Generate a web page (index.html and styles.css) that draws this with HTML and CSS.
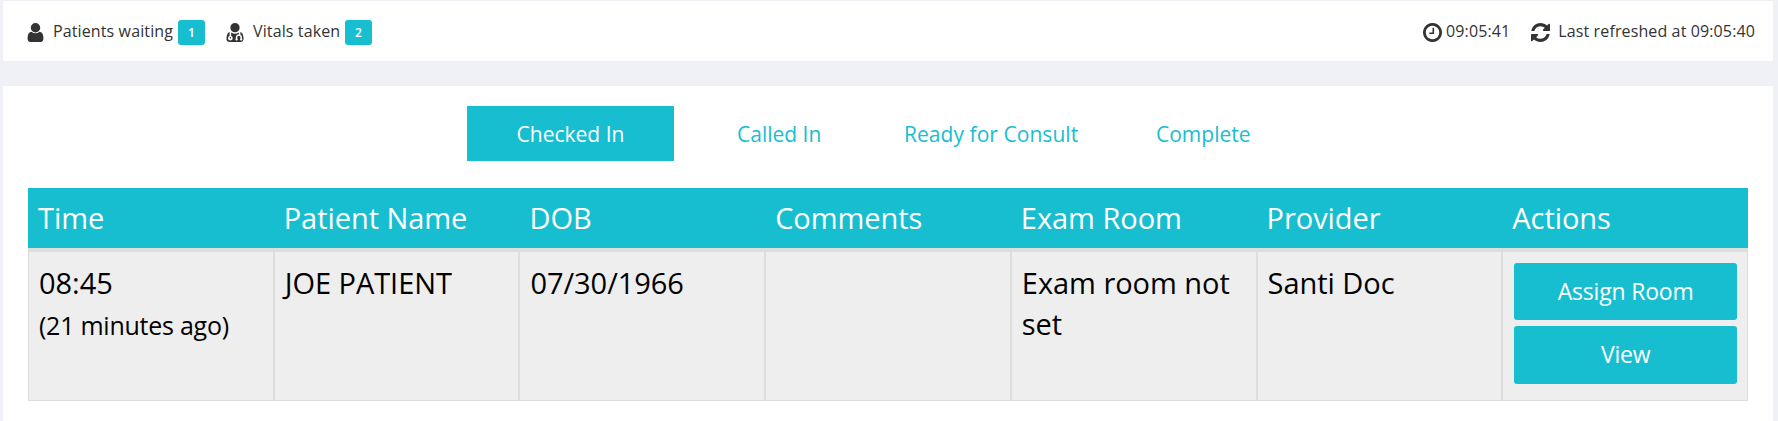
FILE: index.html
```
<!DOCTYPE html>
<html lang="en">
<head>
<meta charset="utf-8">
<title>Patient Flow</title>
<link rel="stylesheet" href="styles.css">
</head>
<body>
<header class="panel status">
  <div class="stat">
    <svg class="icon icon-user" viewBox="256 128 1280 1536"><path d="M1536 1399q0 109-62.500 187t-150.500 78h-854q-88 0-150.500-78t-62.500-187q0-85 8.500-160.500t31.500-152 58.500-131 94-89 134.500-34.500q131 128 313 128t313-128q76 0 134.500 34.500t94 89 58.500 131 31.500 152 8.500 160.500zm-256-887q0 159-112.500 271.500t-271.500 112.500-271.500-112.500-112.500-271.500 112.500-271.500 271.500-112.500 271.500 112.500 112.500 271.500z"/></svg>
    <span class="waiting">Patients waiting</span><span class="badge">1</span>
  </div>
  <div class="stat">
    <svg class="icon icon-md" viewBox="192 128 1408 1572"><path d="M576 1344q0 26-19 45t-45 19-45-19-19-45 19-45 45-19 45 19 19 45zm1024 99q0 121-73 189t-194 68h-874q-121 0-194-68t-73-189q0-68 5.500-131t24-138 47.500-132.500 81-103 120-60.500q-22 52-22 120v203q-58 20-93 70t-35 111q0 80 56 136t136 56 136-56 56-136q0-61-35.500-111t-92.500-70v-203q0-62 25-93 132 104 295 104t295-104q25 31 25 93v64q-106 0-181 75t-75 181v89q-32 29-32 71 0 40 28 68t68 28 68-28 28-68q0-42-32-71v-89q0-52 38-90t90-38 90 38 38 90v89q-32 29-32 71 0 40 28 68t68 28 68-28 28-68q0-42-32-71v-89q0-68-34.500-127.500t-93.500-93.500q0-10 .5-42.500t0-48-2.500-41.500-7-47-13-40q68 15 120 60.500t81 103 47.500 132.500 24 138 5.500 131zm-320-931q0 159-112.500 271.500t-271.500 112.500-271.500-112.500-112.500-271.500 112.500-271.500 271.500-112.500 271.500 112.500 112.500 271.500z"/></svg>
    <span class="vitals">Vitals taken</span><span class="badge">2</span>
  </div>
  <div class="stat clock">
    <svg class="icon" viewBox="128 128 1536 1536"><path d="M1024 544v448q0 14-9 23t-23 9h-320q-14 0-23-9t-9-23v-64q0-14 9-23t23-9h224v-352q0-14 9-23t23-9h64q14 0 23 9t9 23zm416 352q0-148-73-273t-198-198-273-73-273 73-198 198-73 273 73 273 198 198 273 73 273-73 198-198 73-273zm224 0q0 209-103 385.500t-279.500 279.500-385.500 103-385.500-103-279.500-279.500-103-385.500 103-385.500 279.500-279.500 385.500-103 385.500 103 279.500 279.500 103 385.500z"/></svg>
    <span class="time">09:05:41</span>
  </div>
  <div class="stat">
    <svg class="icon" viewBox="128 128 1536 1536"><path d="M1639 1056q0 5-1 7-64 268-268 434.500t-478 166.500q-146 0-282.500-55t-243.500-157l-129 129q-19 19-45 19t-45-19-19-45v-448q0-26 19-45t45-19h448q26 0 45 19t19 45-19 45l-137 137q71 66 161 102t187 36q134 0 250-65t186-179q11-17 53-117 8-23 30-23h192q13 0 22.500 9.500t9.500 22.500zm25-800v448q0 26-19 45t-45 19h-448q-26 0-45-19t-19-45 19-45l138-138q-148-137-349-137-134 0-250 65t-186 179q-11 17-53 117-8 23-30 23h-199q-13 0-22.500-9.500t-9.500-22.500v-7q65-268 270-434.500t480-166.500q146 0 284 55.500t245 156.500l130-129q19-19 45-19t45 19 19 45z"/></svg>
    <span class="refreshed">Last refreshed at 09:05:40</span>
  </div>
</header>
<main class="panel board">
  <nav class="tabs">
    <a class="tab active">Checked In</a>
    <a class="tab called">Called In</a>
    <a class="tab ready">Ready for Consult</a>
    <a class="tab complete">Complete</a>
  </nav>
  <div class="table">
    <div class="row head">
      <div class="cell">Time</div><div class="cell">Patient Name</div><div class="cell">DOB</div><div class="cell">Comments</div><div class="cell">Exam Room</div><div class="cell">Provider</div><div class="cell">Actions</div>
    </div>
    <div class="row body">
      <div class="cell">08:45<div class="ago">(21 minutes ago)</div></div>
      <div class="cell">JOE PATIENT</div>
      <div class="cell">07/30/1966</div>
      <div class="cell"></div>
      <div class="cell">Exam room not set</div>
      <div class="cell">Santi Doc</div>
      <div class="cell actions"><button class="btn">Assign Room</button><button class="btn view">View</button></div>
    </div>
  </div>
</main>
</body>
</html>
```
FILE: styles.css
```
* { box-sizing: border-box; }
body {
  margin: 0;
  padding: 1px 5px 0 3px;
  height: 421px;
  overflow: hidden;
  background: #f0f1f6;
  font-family: "Open Sans", sans-serif;
  color: #333;
}
.panel { background: #fff; }
.status {
  display: flex;
  height: 60px;
  padding: 0 18px 0 24px;
  font-size: 16px;
  letter-spacing: 0.12px;
}
.stat { display: flex; align-items: center; height: 60px; margin-right: 21px; white-space: nowrap; }
.stat:last-child { margin-right: 0; }
.clock { margin-left: auto; }
.icon { width: 19px; height: 19px; fill: #333; margin-top: 2px; flex: none; }
.icon-user { width: 17px; }
.icon-md { width: 18px; }
.waiting { width: 121px; margin-left: 9px; margin-right: 4px; }
.vitals { width: 86px; margin-left: 9px; margin-right: 6px; }
.time { margin-left: 4px; }
.refreshed { margin-left: 8px; }
.badge {
  width: 27px;
  height: 25px;
  margin-top: 3px;
  border-radius: 3px;
  background: #17bed0;
  color: #fff;
  font-size: 12px;
  font-weight: 600;
  line-height: 25px;
  text-align: center;
}
.board { height: 335px; margin-top: 25px; padding: 20px 25px 0; }
.tabs { display: flex; height: 55px; margin-left: 439px; font-size: 21px; line-height: 57px; white-space: nowrap; color: #17bed0; }
.active { width: 207px; background: #17bed0; color: #fff; text-align: center; }
.called { width: 85px; margin-left: 63px; }
.ready { width: 175px; margin-left: 82px; letter-spacing: 0.05px; }
.complete { margin-left: 77px; }
.table { margin-top: 27px; font-size: 29px; letter-spacing: -0.05px; }
.row { display: grid; grid-template-columns: repeat(7, 1fr); }
.head { height: 60px; background: #17bed0; color: #fff; line-height: 60px; }
.head .cell { padding-left: 10px; }
.body { height: 153px; border-top: 3px solid #ddd; color: #000; }
.body .cell { border: 1px solid #ddd; background: #eee; padding: 10px 10px; line-height: 41px; }
.ago { margin-top: 2px; font-size: 25px; letter-spacing: -0.25px; }
.body .actions { display: flex; flex-direction: column; gap: 6px; padding: 11px 10px 0 11px; }
.btn {
  height: 57px;
  padding: 0 0 2px;
  border: 0;
  border-radius: 3px;
  background: #17bed0;
  color: #fff;
  font-family: inherit;
  font-size: 23px;
  letter-spacing: -0.2px;
  flex: none;
}
.view { height: 58px; }
```
